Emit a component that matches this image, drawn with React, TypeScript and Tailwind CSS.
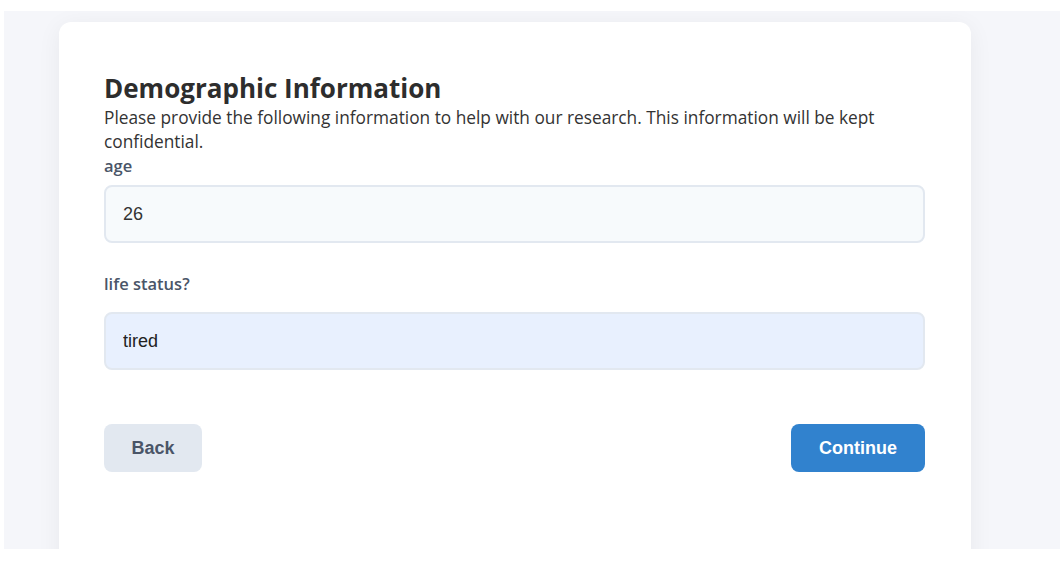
export default function App() {
  return (
    <div className="h-[564px] w-[1060px] overflow-hidden bg-white pl-[4px] pt-[11px]">
      <div className="h-[538px] overflow-hidden bg-[#f5f6fa] pl-[55px] pt-[11px]">
        <div className="h-[620px] w-[912px] rounded-xl bg-white pl-[45px] pr-[46px] pt-[49px] shadow-[0_4px_24px_rgba(0,0,0,0.06)]">
          <h1 className="font-['Open_Sans',sans-serif] text-[26px] font-bold leading-[34px] text-[#2d2d2d]">
            Demographic Information
          </h1>
          <p className="mt-[1px] font-['Open_Sans',sans-serif] text-[17.3px] leading-[24px] text-[#333]">
            Please provide the following information to help with our research. This information will be kept
            confidential.
          </p>

          <label className="block font-['Open_Sans',sans-serif] text-[16.5px] font-semibold leading-[24px] text-[#4a5568]">
            age
          </label>
          <input
            defaultValue="26"
            className="mt-[7px] block h-[58px] w-full rounded-lg border-2 border-[#e2e8f0] bg-[#f7fafc] px-[17px] font-['Liberation_Sans',Arial,sans-serif] text-[18px] text-[#333] outline-none"
          />

          <label className="mt-[29px] block font-['Open_Sans',sans-serif] text-[16.5px] font-semibold leading-[24px] text-[#4a5568]">
            life status?
          </label>
          <input
            defaultValue="tired"
            className="mt-[16px] block h-[58px] w-full rounded-lg border-2 border-[#e2e8f0] bg-[#e8f0fe] px-[17px] font-['Liberation_Sans',Arial,sans-serif] text-[18px] text-[#222] outline-none"
          />

          <div className="mt-[54px] flex items-center justify-between">
            <button className="h-[48px] w-[98px] rounded-lg bg-[#e2e8f0] font-['Liberation_Sans',Arial,sans-serif] text-[18px] font-bold text-[#4a5568]">
              Back
            </button>
            <button className="h-[48px] w-[134px] rounded-lg bg-[#3182ce] font-['Liberation_Sans',Arial,sans-serif] text-[18px] font-bold text-white">
              Continue
            </button>
          </div>
        </div>
      </div>
    </div>
  );
}
